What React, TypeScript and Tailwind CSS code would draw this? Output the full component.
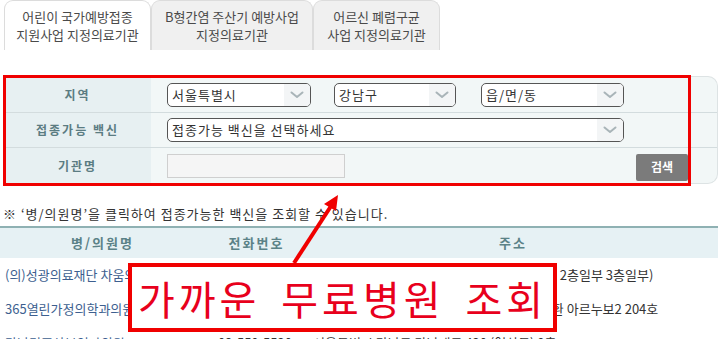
import React from 'react'

// 지정의료기관 검색 화면
const FONT = '"Noto Sans CJK KR", "Noto Sans", sans-serif'

const TABS = [
  { label: ['어린이 국가예방접종', '지원사업 지정의료기관'], w: 'w-[147px]', active: true },
  { label: ['B형간염 주산기 예방사업', '지정의료기관'], w: 'w-[162px]', active: false },
  { label: ['어르신 폐렴구균', '사업 지정의료기관'], w: 'w-[127px]', active: false },
]

const ROWS = [
  { name: '(의)성광의료재단 차움의원', tel: '02-3015-5000', addr: '서울특별시 강남구 도산대로 442 (청담동 피엔 2층일부 3층일부)' },
  { name: '365열린가정의학과의원', tel: '02-557-3650', addr: '서울특별시 강남구 선릉로 4281, (대치동), 대환 아르누보2 204호' },
  { name: '강남리즈산부인과의원', tel: '02-550-5520', addr: '서울특별시 강남구 강남대로 420 (역삼동) 9층' },
]

function Chevron() {
  return (
    <svg width="14" height="8" viewBox="0 0 14 8" fill="none">
      <path d="M1.5 1.5 L7 6 L12.5 1.5" stroke="#a9b4b8" strokeWidth="2" strokeLinecap="round" strokeLinejoin="round" />
    </svg>
  )
}

function Select({ value, w }: { value: string; w: string }) {
  return (
    <div className={`${w} flex h-[24px] items-center overflow-hidden rounded-[5px] border border-[#555] bg-white`}>
      <span className="flex-1 pl-[4px] text-[13px] tracking-[1px] text-[#333]">{value}</span>
      <span className="flex h-full w-[26px] items-center justify-center bg-[#f3f5f6]">
        <Chevron />
      </span>
    </div>
  )
}

function Label({ children }: { children: React.ReactNode }) {
  return (
    <div className="flex w-[147px] items-center justify-center bg-[#e7f0f2] text-[12px] font-bold tracking-[2px] text-[#5b7c82]">
      {children}
    </div>
  )
}

export default function App() {
  return (
    <div className="relative h-[339px] w-[718px] overflow-hidden bg-white" style={{ fontFamily: FONT }}>
      {/* 탭 */}
      <div className="flex h-[50px] items-end pl-[4px]">
        {TABS.map((t) => (
          <div
            key={t.label[0]}
            className={`${t.w} flex h-[50px] flex-col items-center justify-center rounded-t-[9px] border border-b-0 border-[#dcdcdc] text-[13px] leading-[18px] text-[#4a4a4a] ${
              t.active ? 'bg-white' : 'bg-[#f0f0f0]'
            }`}
          >
            <span>{t.label[0]}</span>
            <span>{t.label[1]}</span>
          </div>
        ))}
      </div>

      {/* 검색 패널 */}
      <div className="ml-[4px] mt-[26px] overflow-hidden rounded-r-[10px] border border-l-0 border-[#dde3e4] bg-[#f2f7f7]">
        <div className="flex h-[35px]">
          <Label>지역</Label>
          <div className="flex flex-1 items-center pl-[16px]">
            <Select value="서울특별시" w="w-[144px]" />
            <div className="w-[23px]" />
            <Select value="강남구" w="w-[122px]" />
            <div className="w-[25px]" />
            <Select value="읍/면/동" w="w-[143px]" />
          </div>
        </div>
        <div className="h-px bg-[#d3dcde]" />
        <div className="flex h-[34px]">
          <Label>접종가능 백신</Label>
          <div className="flex flex-1 items-center pl-[16px]">
            <Select value="접종가능 백신을 선택하세요" w="w-[457px]" />
          </div>
        </div>
        <div className="h-px bg-[#d3dcde]" />
        <div className="flex h-[35px]">
          <Label>기관명</Label>
          <div className="flex flex-1 items-center pl-[16px] pr-[29px]">
            <div className="h-[24px] w-[178px] border border-[#cfcfcf] bg-[#f5f5f5]" />
            <div className="flex-1" />
            <button className="mt-[3px] h-[27px] w-[52px] rounded-[2px] bg-[#7b7b7b] text-[12px] font-bold text-white">
              검색
            </button>
          </div>
        </div>
      </div>

      {/* 안내 */}
      <p className="ml-[3px] mt-[22px] text-[13px] leading-[16px] tracking-[1px] text-[#333]">
        ※ ‘병/의원명’을 클릭하여 접종가능한 백신을 조회할 수 있습니다.
      </p>

      {/* 목록 */}
      <div className="mt-[4px] border-t-2 border-[#8fb1b3]">
        <div className="flex h-[30px] items-center bg-[#e6f1f4] text-[13px] font-bold tracking-[2px] text-[#5b8287]">
          <div className="w-[205px] text-center">병/의원명</div>
          <div className="w-[103px] text-center">전화번호</div>
          <div className="flex-1 text-center">주소</div>
        </div>
        {ROWS.map((r) => (
          <div key={r.name} className="flex h-[34px] items-center whitespace-nowrap text-[13px]">
            <div className="w-[218px] overflow-hidden pl-[5px] text-[#3d5f8f]">{r.name}</div>
            <div className="w-[95px] overflow-hidden text-[#333]">{r.tel}</div>
            <div className="flex-1 overflow-hidden text-[#333]">{r.addr}</div>
          </div>
        ))}
      </div>

      {/* 빨간 표시 */}
      <div className="pointer-events-none absolute left-[3px] top-[75px] h-[111px] w-[688px] border-[3px] border-[#f00000]" />
      <svg className="pointer-events-none absolute left-0 top-0" width="718" height="339">
        <line x1="294" y1="263" x2="333" y2="203" stroke="#f00000" strokeWidth="4" />
        <polygon points="338,195 324,204 336,211" fill="#f00000" />
      </svg>
      <div className="absolute left-[128px] top-[263px] flex h-[69px] w-[429px] items-center justify-center border-[4px] border-[#f00000] bg-white">
        <span className="whitespace-nowrap text-[40px] leading-none tracking-[4px] text-[#e8001c] [word-spacing:8px]">
          가까운 무료병원 조회
        </span>
      </div>
    </div>
  )
}
